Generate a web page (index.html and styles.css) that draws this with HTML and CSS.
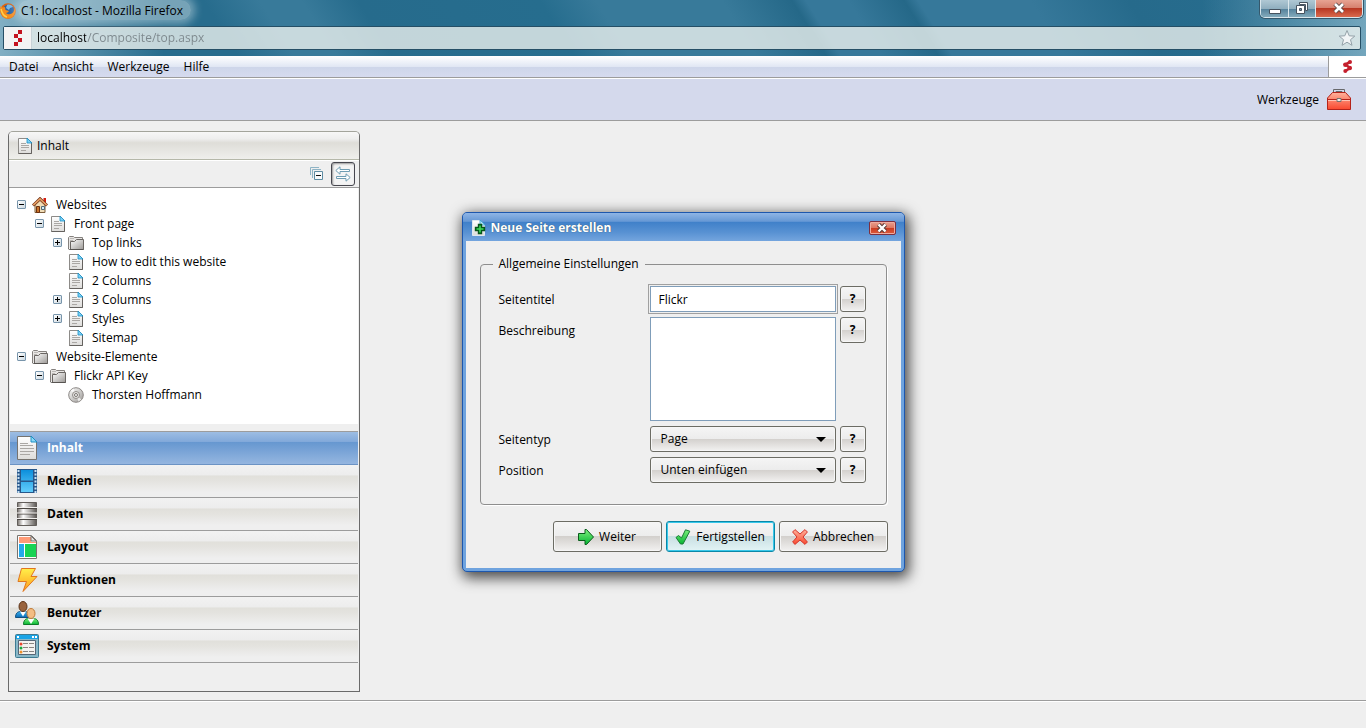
FILE: index.html
```html
<!DOCTYPE html>
<html lang="de">
<head>
    <meta charset="UTF-8">
    <meta name="viewport" content="width=device-width, initial-scale=1.0">
    <title>C1: localhost</title>
    <link rel="stylesheet" href="styles.css">
</head>
<body>
    <!-- icon sprite -->
    <svg class="sprite" width="0" height="0" aria-hidden="true">
        <defs>
            <linearGradient id="g-paper" x1="0" y1="0" x2="0" y2="1"><stop offset="0" stop-color="#fff"/><stop offset="1" stop-color="#dddcda"/></linearGradient>
            <linearGradient id="g-folder" x1="0" y1="0" x2="1" y2="1"><stop offset="0" stop-color="#fff"/><stop offset="1" stop-color="#9c9996"/></linearGradient>
            <linearGradient id="g-metal" x1="0" y1="0" x2="1" y2="0"><stop offset="0" stop-color="#77726d"/><stop offset=".3" stop-color="#fff"/><stop offset="1" stop-color="#5d5955"/></linearGradient>
            <linearGradient id="g-film" x1="0" y1="0" x2="0" y2="1"><stop offset="0" stop-color="#0c8fdc"/><stop offset="1" stop-color="#62cdfb"/></linearGradient>
            <linearGradient id="g-green" x1="0" y1="0" x2="0" y2="1"><stop offset="0" stop-color="#7cf07c"/><stop offset="1" stop-color="#06b433"/></linearGradient>
            <linearGradient id="g-red" x1="0" y1="0" x2="0" y2="1"><stop offset="0" stop-color="#ffb29c"/><stop offset="1" stop-color="#f9482e"/></linearGradient>
            <linearGradient id="g-bolt" x1="0" y1="0" x2="0" y2="1"><stop offset="0" stop-color="#fff04a"/><stop offset="1" stop-color="#ff9a1c"/></linearGradient>
            <linearGradient id="g-blue" x1="0" y1="0" x2="0" y2="1"><stop offset="0" stop-color="#3db2ef"/><stop offset="1" stop-color="#0a6ab4"/></linearGradient>
        </defs>
        <symbol id="page" viewBox="0 0 16 16">
            <path d="M1.500.5h9l4 4v11h-13z" fill="url(#g-paper)" stroke="#8d8b88"/>
            <path d="M14.500 4v11.500h-13" fill="none" stroke="#65625f"/>
            <path d="M10 0v5h5z" fill="#7ad0f5" stroke="#1d8fc4" stroke-width=".8"/>
            <path d="M4 5.500h5M4 7.500h8M4 9.500h8M4 12.500h5" stroke="#aaa7a4"/>
        </symbol>
        <symbol id="folder" viewBox="0 0 16 16">
            <path d="M.5 14V2.500l1-1h4l1 1h8V5" fill="#e8e6e4" stroke="#85817e"/>
            <path d="M2 3.500h4M2 5.500h3M2 7.500h2" stroke="#bbb8b5"/>
            <path d="M2.500 14.500V6.500h4l2-2h7v10z" fill="url(#g-folder)" stroke="#6a6663"/>
            <path d="M.5 14l1 .500h14" fill="none" stroke="#575451"/>
        </symbol>
        <symbol id="house" viewBox="0 0 16 16">
            <path d="M11.500 1h2.500v6h-2.500z" fill="#d31c10"/>
            <path d="M3 7l5-5 5 5v8.500H3z" fill="#f0dcb6" stroke="#7b5c3a"/>
            <path d="M4.500 9.500h3v6h-3z" fill="#c87229" stroke="#6c3010"/>
            <path d="M9.500 9.500h3v3h-3z" fill="#d4edf8" stroke="#526a78"/>
            <path d="M1 8.500L8 1.800l7 6.700" fill="none" stroke="#6b2d12" stroke-width="3"/>
            <path d="M1.300 8.200L8 1.800l6.700 6.400" fill="none" stroke="#e7a065" stroke-width="1.600"/>
        </symbol>
        <symbol id="disc" viewBox="0 0 16 16">
            <circle cx="8" cy="8" r="7.300" fill="url(#g-folder)" stroke="#8b8784"/>
            <path d="M8 8L2.500 3.500l3-2zM8 8l5.500 4.500-3 2z" fill="#fff" opacity=".7"/>
            <circle cx="8" cy="8" r="3.500" fill="#e8e6e4" stroke="#918d8a"/>
            <circle cx="8" cy="8" r="1.500" fill="#fff" stroke="#77736f"/>
        </symbol>
        <symbol id="bigpage" viewBox="0 0 24 24">
            <path d="M2.500.5h14l5 5v18h-19z" fill="url(#g-paper)" stroke="#76736f"/>
            <path d="M16 0v6h6z" fill="#8cd8f6" stroke="#1d8fc4"/>
            <path d="M5 7.500h8M5 9.500h13M5 12.500h14M5 15.500h14M5 18.500h10" stroke="#aaa7a4"/>
        </symbol>
        <symbol id="film" viewBox="0 0 24 24">
            <path d="M2 0h20v24H2z" fill="#28578a"/>
            <path d="M6 1h12v10.500H6zM6 13h12v10H6z" fill="url(#g-film)"/>
            <path d="M3.500 1v23M20.500 1v23" stroke="#c8e2f4" stroke-width="2" stroke-dasharray="2 1.500"/>
        </symbol>
        <symbol id="database" viewBox="0 0 24 24">
            <path d="M2.500.5h19v23h-19z" fill="url(#g-metal)" stroke="#625e5a"/>
            <path d="M2 6.500h20M2 12h20M2 17.500h20" stroke="#4a4743"/>
            <path d="M2 5.500h20M2 11h20M2 16.500h20" stroke="#f1efec"/>
        </symbol>
        <symbol id="layout" viewBox="0 0 24 24">
            <path d="M2.500.5h14l5 5v18h-19z" fill="#fff" stroke="#76736f"/>
            <path d="M4 2h12v5h5v1H4z" fill="#ff9b77"/>
            <path d="M4 9h5v13H4z" fill="#24a9ea"/>
            <path d="M10 9h11v13H10z" fill="#18d353"/>
            <path d="M16 1v5h5z" fill="#e5e3e1" stroke="#76736f"/>
        </symbol>
        <symbol id="bolt" viewBox="0 0 24 24">
            <path d="M6.500.5h14l-4.500 8h6L8 23.500l3.500-10H3z" fill="url(#g-bolt)" stroke="#e0761f"/>
        </symbol>
        <symbol id="users" viewBox="0 0 24 24">
            <path d="M.5 16.500c0-4 2-6 5-6h5c2 0 3 2 3 6z" fill="url(#g-blue)" stroke="#12507f"/>
            <path d="M5 10.500l3 5 3-5z" fill="#fff"/>
            <ellipse cx="8" cy="5.500" rx="4" ry="5" fill="#99633d" stroke="#5c3318"/>
            <path d="M8.500 23.500c0-4 2-6 5-6h5c3 0 5 2 5 6z" fill="url(#g-green)" stroke="#0d7a27"/>
            <path d="M12.500 17.500l3.500 5.500 3.500-5.500z" fill="#fff"/>
            <ellipse cx="16" cy="12.500" rx="4" ry="5" fill="#f3bd83" stroke="#c07a38"/>
        </symbol>
        <symbol id="system" viewBox="0 0 24 24">
            <rect x=".5" y=".5" width="23" height="23" rx="1" fill="#88b8c8" stroke="#3e7b92"/>
            <path d="M1 1h22v4H1z" fill="#1aa4e6"/>
            <path d="M2 3h2M17 3h2M20 3h2" stroke="#fff" stroke-width="2"/>
            <path d="M3.500 6.500h17v14h-17z" fill="#f3f2f0" stroke="#567"/>
            <circle cx="6" cy="10" r="1.500" fill="#e8452d"/><circle cx="6" cy="14" r="1.500" fill="#19a83c"/><circle cx="6" cy="18" r="1.500" fill="#f0902a"/>
            <path d="M8 9.500h11M8 13.500h11M8 17.500h11" stroke="#888581" stroke-dasharray="5 1"/>
        </symbol>
        <symbol id="logo" viewBox="0 0 9 16">
            <path d="M5 0h4v4H5zM1 4h4v4H1zM5 8h4v4H5zM1 12h4v4H1z" fill="#c4121f"/>
        </symbol>
        <symbol id="logo-round" viewBox="0 0 9 13">
            <path d="M7 2L2.500 4.500 7 8l-4.500 3" fill="none" stroke="#c4202d" stroke-width="2.600"/>
            <g fill="#c4202d"><circle cx="7" cy="2" r="2"/><circle cx="2.300" cy="4.800" r="2.200"/><circle cx="6.800" cy="8" r="2.200"/><circle cx="2.300" cy="11" r="2"/></g>
        </symbol>
    </svg>

    <header class="chrome">
        <div class="titlebar">
            <svg class="icon16" viewBox="0 0 16 16">
                <circle cx="8" cy="8" r="7.800" fill="#e2640d"/>
                <circle cx="8.500" cy="7" r="5.500" fill="#2a63a6"/>
                <path d="M7 2c2-1 5 0 6 2l-3 1-1 2-3-2z" fill="#78b8e6"/>
                <path d="M.5 3l2 1.500L5 4l.500 3L9 8 7.500 9.500 6 10c2 2 6 2 8-2l1-3c1 6-2 10.500-7 10.500S-.5 11 .5 3z" fill="#f68b1c"/>
                <path d="M1 6c1 5 3 7 6 8" fill="none" stroke="#ffd04a" stroke-width="1.500"/>
            </svg>
            <span class="window-title">C1: localhost - Mozilla Firefox</span>
            <div class="window-controls">
                <button type="button" class="minimize" aria-label="Minimieren">
                    <svg width="12" height="12" viewBox="0 0 12 12"><path d="M.5 7.500h11v4H.5z" fill="#fff" stroke="#46535f"/></svg>
                </button>
                <button type="button" class="restore" aria-label="Verkleinern">
                    <svg width="12" height="12" viewBox="0 0 12 12"><path d="M3.500.5h8v8h-2v-6h-6z" fill="#fff" stroke="#46535f"/><path d="M.5 3.500h8v8h-8z" fill="#fff" stroke="#46535f"/><path d="M3.500 6.500h2v2h-2z" fill="#7794a6" stroke="#46535f"/></svg>
                </button>
                <button type="button" class="quit" aria-label="Schließen">
                    <svg width="12" height="12" viewBox="0 0 12 12"><path d="M2 2l8 8M10 2l-8 8" stroke="#5a4a4a" stroke-width="4.500"/><path d="M2 2l8 8M10 2l-8 8" stroke="#fff" stroke-width="2.600"/></svg>
                </button>
            </div>
        </div>
        <div class="address">
            <span class="favicon"><svg width="9" height="16"><use href="#logo"/></svg></span>
            <input type="text" aria-label="Adresse" value="localhost/Composite/top.aspx">
            <button type="button" class="star" aria-label="Lesezeichen">
                <svg width="18" height="18" viewBox="0 0 18 18"><path d="M9 1.500l2.200 5.300 5.600.3-4.300 3.600 1.500 5.600L9 13.200l-5 3.100 1.500-5.600L1.200 7.100l5.600-.3z" fill="#f2f5f6" stroke="#94a2a9"/></svg>
            </button>
        </div>
    </header>

    <div class="app">
        <nav class="menubar">
            <button type="button">Datei</button>
            <button type="button">Ansicht</button>
            <button type="button">Werkzeuge</button>
            <button type="button">Hilfe</button>
            <span class="brand"><svg width="9" height="13"><use href="#logo-round"/></svg></span>
        </nav>
        <div class="toolbar">
            <button type="button">
                Werkzeuge
                <svg width="24" height="24" viewBox="0 0 24 24">
                    <path d="M6.500 5V1.500h11V5M9 5V3.500h6V5" fill="none" stroke="#67686b"/>
                    <path d="M.5 10l5-5.500h13l5 5.500v11.500H.5z" fill="url(#g-red)" stroke="#b5231a"/>
                    <path d="M1 12.500h22" stroke="#ffc4b4"/><path d="M1 11.500h22M1 21.500h22" stroke="#b5231a"/>
                    <path d="M10 10.500h4v3h-4z" fill="#f1eeec" stroke="#77706d"/>
                </svg>
            </button>
        </div>

        <main class="workspace">
            <aside class="sidebar">
                <h2 class="panel-tab"><svg class="icon16"><use href="#page"/></svg>Inhalt</h2>
                <div class="panel-tools">
                    <button type="button" aria-label="Alle schließen">
                        <svg width="14" height="14" viewBox="0 0 14 14"><path d="M9 .5H.5V8M11 2.500H2.500V11" fill="none" stroke="#8fb4c5"/><path d="M4.500 4.500h8v8h-8z" fill="#f8fafb" stroke="#5e8ca3"/><path d="M6 8.500h5" stroke="#111"/></svg>
                    </button>
                    <button type="button" class="pressed" aria-label="Verknüpfen">
                        <svg width="16" height="16" viewBox="0 0 16 16"><path d="M.8 4.500L5 .8v2.700h9.500v2H5v2.700zM15.200 11.500L11 7.800v2.700H1.500v2H11v2.700z" fill="#fff" stroke="#6f9db3"/></svg>
                    </button>
                </div>
                <ul class="tree">
                    <li class="level1"><button type="button" class="toggle open" aria-label="Zuklappen"></button><svg class="icon16"><use href="#house"/></svg>Websites</li>
                    <li class="level2"><button type="button" class="toggle open" aria-label="Zuklappen"></button><svg class="icon16"><use href="#page"/></svg>Front page</li>
                    <li class="level3"><button type="button" class="toggle" aria-label="Aufklappen"></button><svg class="icon16"><use href="#folder"/></svg>Top links</li>
                    <li class="level3"><span class="leaf"></span><svg class="icon16"><use href="#page"/></svg>How to edit this website</li>
                    <li class="level3"><span class="leaf"></span><svg class="icon16"><use href="#page"/></svg>2 Columns</li>
                    <li class="level3"><button type="button" class="toggle" aria-label="Aufklappen"></button><svg class="icon16"><use href="#page"/></svg>3 Columns</li>
                    <li class="level3"><button type="button" class="toggle" aria-label="Aufklappen"></button><svg class="icon16"><use href="#page"/></svg>Styles</li>
                    <li class="level3"><span class="leaf"></span><svg class="icon16"><use href="#page"/></svg>Sitemap</li>
                    <li class="level1"><button type="button" class="toggle open" aria-label="Zuklappen"></button><svg class="icon16"><use href="#folder"/></svg>Website-Elemente</li>
                    <li class="level2"><button type="button" class="toggle open" aria-label="Zuklappen"></button><svg class="icon16"><use href="#folder"/></svg>Flickr API Key</li>
                    <li class="level3"><span class="leaf"></span><svg class="icon16"><use href="#disc"/></svg>Thorsten Hoffmann</li>
                </ul>
                <div class="perspectives">
                    <button type="button" class="active"><svg class="icon24"><use href="#bigpage"/></svg>Inhalt</button>
                    <button type="button"><svg class="icon24"><use href="#film"/></svg>Medien</button>
                    <button type="button"><svg class="icon24"><use href="#database"/></svg>Daten</button>
                    <button type="button"><svg class="icon24"><use href="#layout"/></svg>Layout</button>
                    <button type="button"><svg class="icon24"><use href="#bolt"/></svg>Funktionen</button>
                    <button type="button"><svg class="icon24"><use href="#users"/></svg>Benutzer</button>
                    <button type="button"><svg class="icon24"><use href="#system"/></svg>System</button>
                </div>
            </aside>
        </main>
        <footer class="statusbar"></footer>

        <div class="overlay">
            <form class="dialog" role="dialog" aria-labelledby="dialog-title">
                <div class="dialog-title">
                    <svg class="icon16" viewBox="0 0 16 16">
                        <path d="M1.500.5h8l4 4v11h-12z" fill="url(#g-paper)" stroke="#dfe8ef"/>
                        <path d="M9 0v5h5z" fill="#b5e5fa" stroke="#2d9fd2" stroke-width=".8"/>
                        <path d="M7.500 4.500h3v3h3v3h-3v3h-3v-3h-3v-3h3z" fill="#19b53b" stroke="#07551a" stroke-width="1.400"/>
                        <path d="M9 6v6M6 9h6" stroke="#4ddb62"/>
                    </svg>
                    <h1 id="dialog-title">Neue Seite erstellen</h1>
                    <button type="button" class="dialog-close" aria-label="Schließen">
                        <svg width="12" height="10" viewBox="0 0 12 10"><path d="M2.500 1.500l7 7M9.500 1.500l-7 7" stroke="#5b3d3a" stroke-width="4.400"/><path d="M2.500 1.500l7 7M9.500 1.500l-7 7" stroke="#fff" stroke-width="2.400"/></svg>
                    </button>
                </div>
                <div class="dialog-body">
                    <fieldset>
                        <legend>Allgemeine Einstellungen</legend>
                        <div class="field">
                            <label for="title">Seitentitel</label>
                            <input type="text" id="title" class="focused" value="Flickr">
                            <button type="button" class="help">?</button>
                        </div>
                        <div class="field">
                            <label for="description">Beschreibung</label>
                            <textarea id="description"></textarea>
                            <button type="button" class="help">?</button>
                        </div>
                        <div class="field">
                            <label for="type">Seitentyp</label>
                            <div class="select"><select id="type"><option>Page</option></select></div>
                            <button type="button" class="help">?</button>
                        </div>
                        <div class="field">
                            <label for="position">Position</label>
                            <div class="select"><select id="position"><option>Unten einfügen</option></select></div>
                            <button type="button" class="help">?</button>
                        </div>
                    </fieldset>
                    <div class="actions">
                        <button type="button">
                            <svg class="icon16" viewBox="0 0 16 16"><path d="M.5 4.500H7v-4h1.500L15.500 8l-7 7.500H7v-4H.5z" fill="url(#g-green)" stroke="#0a5c1c"/></svg>
                            Weiter
                        </button>
                        <button type="submit" class="default">
                            <svg class="icon16" viewBox="0 0 16 16"><path d="M1 8.500L3.500 6.500l3 2.500L10.500.8l4.300 1.400L8 15H5.500z" fill="url(#g-green)" stroke="#1a7a35" stroke-linejoin="round"/></svg>
                            Fertigstellen
                        </button>
                        <button type="button">
                            <svg class="icon16" viewBox="0 0 16 16"><path d="M3 .6L8 5l5-4.400L15.400 3 11 8l4.400 5-2.400 2.400L8 11l-5 4.400L.6 13 5 8 .6 3z" fill="url(#g-red)" stroke="#d4362b" stroke-linejoin="round"/></svg>
                            Abbrechen
                        </button>
                    </div>
                </div>
            </form>
        </div>
    </div>
</body>
</html>
```
FILE: styles.css
```css
* { box-sizing: border-box; }
body { margin: 0; height: 100vh; display: flex; flex-direction: column; background: #efefef; color: #000; font: 12px/18px "Open Sans", "Noto Sans", sans-serif; overflow: hidden; }
button, input, select, textarea { font: inherit; color: inherit; margin: 0; padding: 0; border: 0; background: none; }
button { display: flex; align-items: center; cursor: pointer; }
svg { display: block; flex: none; }
.sprite { position: absolute; }
.icon16 { width: 16px; height: 16px; }
.icon24 { width: 24px; height: 24px; }

/* browser window */
.chrome { flex: none; height: 56px; padding: 0 5px 0 3px; background: linear-gradient(90deg, rgba(190, 220, 232, 0.6), rgba(190, 220, 232, 0) 12%, rgba(190, 220, 232, 0) 88%, rgba(190, 220, 232, 0.5)), linear-gradient(58deg, #276c8d 0, #276c8d 17%, #387a9a 21%, #387a9a 24%, #266b8c 28%, #266d8e 41%, #387a9a 45%, #387a9a 54%, #256888 59%, #36789a 60%, #36789a 63%, #256888 67%, #36789a 68%, #36789a 76%, #266a8b 83%, #287092 100%); }
.titlebar { display: flex; height: 26px; }
.titlebar .icon16 { margin: 3px 2px 0 -3px; }
.window-title { height: 20px; line-height: 22px; padding: 0 8px 0 3px; background: rgba(215, 230, 236, 0.45); border-radius: 10px; box-shadow: 0 0 8px 4px rgba(215, 230, 236, 0.45); }
.window-controls { display: flex; height: 18px; margin-left: auto; margin-right: -2px; border: 1px solid #d9e6ec; border-top: 0; border-radius: 0 0 5px 5px; box-shadow: 0 0 0 1px #35586c; overflow: hidden; }
.window-controls button { justify-content: center; padding-bottom: 2px; background: linear-gradient(#b0c8d4, #90afbf 50%, #53809a 51%, #83aabb); border-right: 1px solid #dce8ed; }
.minimize { width: 28px; }
.restore { width: 27px; }
.window-controls .quit { width: 46px; border-right: 0; background: linear-gradient(#e7a392, #d6806e 45%, #b83722 50%, #d96a4e); }
.address { display: flex; height: 24px; background: rgba(239, 243, 240, 0.78); border: 1px solid #254f66; border-radius: 2px; }
.favicon { display: flex; align-items: center; justify-content: center; width: 28px; background: #f3f3f3; border-right: 1px solid #c8d2d7; }
.address input { flex: 1; padding-left: 5px; color: transparent; background: linear-gradient(90deg, #000 54px, #7c878c 54px); background-clip: text; -webkit-background-clip: text; outline: none; }
.star { padding: 0 4px; }

/* menu and toolbar */
.app { flex: 1; position: relative; display: flex; flex-direction: column; min-height: 0; }
.menubar { flex: none; display: flex; gap: 14px; height: 22px; padding-left: 9px; background: linear-gradient(#fff, #e1e7f4 50%, #cdd5e9 50%, #d6dbef); border-bottom: 1px solid #9c9c9c; }
.brand { display: flex; align-items: center; justify-content: center; width: 38px; margin-left: auto; background: #fff; border-left: 1px solid #9c9c9c; }
.toolbar { flex: none; display: flex; justify-content: flex-end; height: 43px; padding-right: 15px; background: #d4d9ec; border-top: 1px solid #fff; border-bottom: 1px solid #9c9c9c; }
.toolbar button { gap: 8px; }

/* left panel */
.workspace { flex: 1; display: flex; min-height: 0; padding: 10px 8px 8px; }
.sidebar { display: flex; flex-direction: column; width: 352px; border: 1px solid #6a6a6a; border-top-color: #a3a49c; border-radius: 5px 5px 0 0; }
.panel-tab { flex: none; display: flex; align-items: center; gap: 4px; height: 28px; margin: 0; padding: 0 8px; font-size: 12px; font-weight: normal; background: linear-gradient(#f7f7f7, #eee 25%, #deddd8 40%, #efefec); border-bottom: 1px solid #b5b8a9; border-radius: 4px 4px 0 0; }
.panel-tools { flex: none; display: flex; justify-content: flex-end; align-items: center; height: 28px; padding-right: 4px; border-top: 1px solid #fff; border-bottom: 1px solid #9c9c9c; }
.panel-tools button { justify-content: center; width: 28px; height: 24px; }
.panel-tools .pressed { width: 24px; background: #f4f4f4; border: 1px solid #47474f; border-radius: 3px; box-shadow: inset 1px 1px 2px #999; }
.tree { flex: 1; min-height: 0; margin: 0 1px; padding: 7px 0 0; list-style: none; background: #fff; overflow: hidden; }
.tree li { display: flex; align-items: center; height: 19px; }
.tree .level1 { padding-left: 7px; }
.tree .level2 { padding-left: 25px; }
.tree .level3 { padding-left: 43px; }
.tree .icon16 { margin: 0 8px 0 6px; }
.leaf { width: 9px; }
.toggle { width: 9px; height: 9px; border: 1px solid #7895ab; border-radius: 1px; background: linear-gradient(#000, #000) center / 5px 1px no-repeat, linear-gradient(#000, #000) center / 1px 5px no-repeat, linear-gradient(135deg, #fff, #cdd9e1); }
.toggle.open { background: linear-gradient(#000, #000) center / 5px 1px no-repeat, linear-gradient(135deg, #fff, #cdd9e1); }
.perspectives { flex: none; margin: 7px 1px 28px; border-top: 1px solid #9c9c9c; }
.perspectives button { width: 100%; height: 33px; gap: 8px; padding-left: 5px; font-weight: bold; line-height: 20px; background: linear-gradient(#f2f2f2, #ededed 30%, #e1e0db 35%, #e4e3df 50%, #efefef 85%); border-bottom: 1px solid #9c9c9c; }
.perspectives .active { color: #fff; background: linear-gradient(#9dbde3, #82a9da 30%, #6697d0 32%, #95b6e0); border-bottom-color: #6c93c4; }
.statusbar { flex: none; height: 28px; border-top: 1px solid #9c9c9c; box-shadow: inset 0 1px #fff; }

/* dialog */
.overlay { position: absolute; inset: 0; display: grid; place-items: center; }
.dialog { width: 443px; padding: 0 3px 3px; background: #6fa3de; border: 1px solid #1d57ad; border-radius: 5px; box-shadow: 2px 4px 14px 2px rgba(0, 0, 0, 0.7); }
.dialog-title { display: flex; align-items: center; height: 28px; margin: 0 -3px; padding: 2px 8px 0; border-radius: 4px 4px 0 0; color: #fff; background: linear-gradient(#8fb5e5, #6698d5 30%, #3f80c9 32%, #5992d3 70%, #74a5de); }
.dialog-title h1 { flex: 1; margin: 0 0 0 4px; font-size: 12px; line-height: 18px; text-shadow: 0 0 1px #245; }
.dialog-close { justify-content: center; width: 27px; height: 14px; border: 1px solid #7d2f3f; border-radius: 2px; box-shadow: inset 0 0 0 1px #efab9e; background: linear-gradient(#e8a08f, #dd7661 48%, #c93a20 50%, #dc5c3d); }
.dialog-body { padding: 14px 13px 16px 14px; background: #efefef; }
fieldset { margin: 0 1px 16px 0; padding: 13px 20px 21px 18px; border: 1px solid #8e8e8e; border-radius: 4px; box-shadow: 1px 1px #fff; }
legend { margin-left: -6px; padding: 0 6px; }
.field { display: grid; grid-template-columns: 151px 1fr 26px; margin-bottom: 5px; }
.field:last-child { margin-bottom: 0; }
.field label { padding-top: 5px; }
.field input { height: 26px; padding: 1px 8px 0; background: #fff; border: 1px solid #7f9db9; }
.field input, .field textarea, .field .select { margin-right: 4px; min-width: 0; }
.field .focused { outline: 1px solid #a0a0a0; outline-offset: 1px; }
.field textarea { height: 104px; padding: 4px 8px; background: #fff; border: 1px solid #7f9db9; resize: none; }
.select { position: relative; }
.select::after { content: ""; position: absolute; top: 11px; right: 10px; border: 5px solid transparent; border-top-color: #000; border-bottom: 0; pointer-events: none; }
.select select { display: block; width: 100%; height: 26px; padding: 0 10px; appearance: none; }
.select select, .help, .actions button { background: linear-gradient(#f5f5f5, #ececec 50%, #d3d0cd 50%, #efeeed 95%); border: 1px solid #6c6c64; border-radius: 3px; box-shadow: inset 0 0 0 1px #f6f6f6; }
.help { justify-content: center; width: 26px; height: 26px; font-weight: bold; }
.actions { display: flex; justify-content: flex-end; gap: 4px; }
.actions button { justify-content: center; width: 109px; height: 31px; gap: 5px; }
.actions .default { background: linear-gradient(#f5f5f5, #ececec 50%, #c9dfe2 50%, #e3f4f6); border-color: #0a88a8; box-shadow: inset 0 0 0 1px #38c8ea; }
```
